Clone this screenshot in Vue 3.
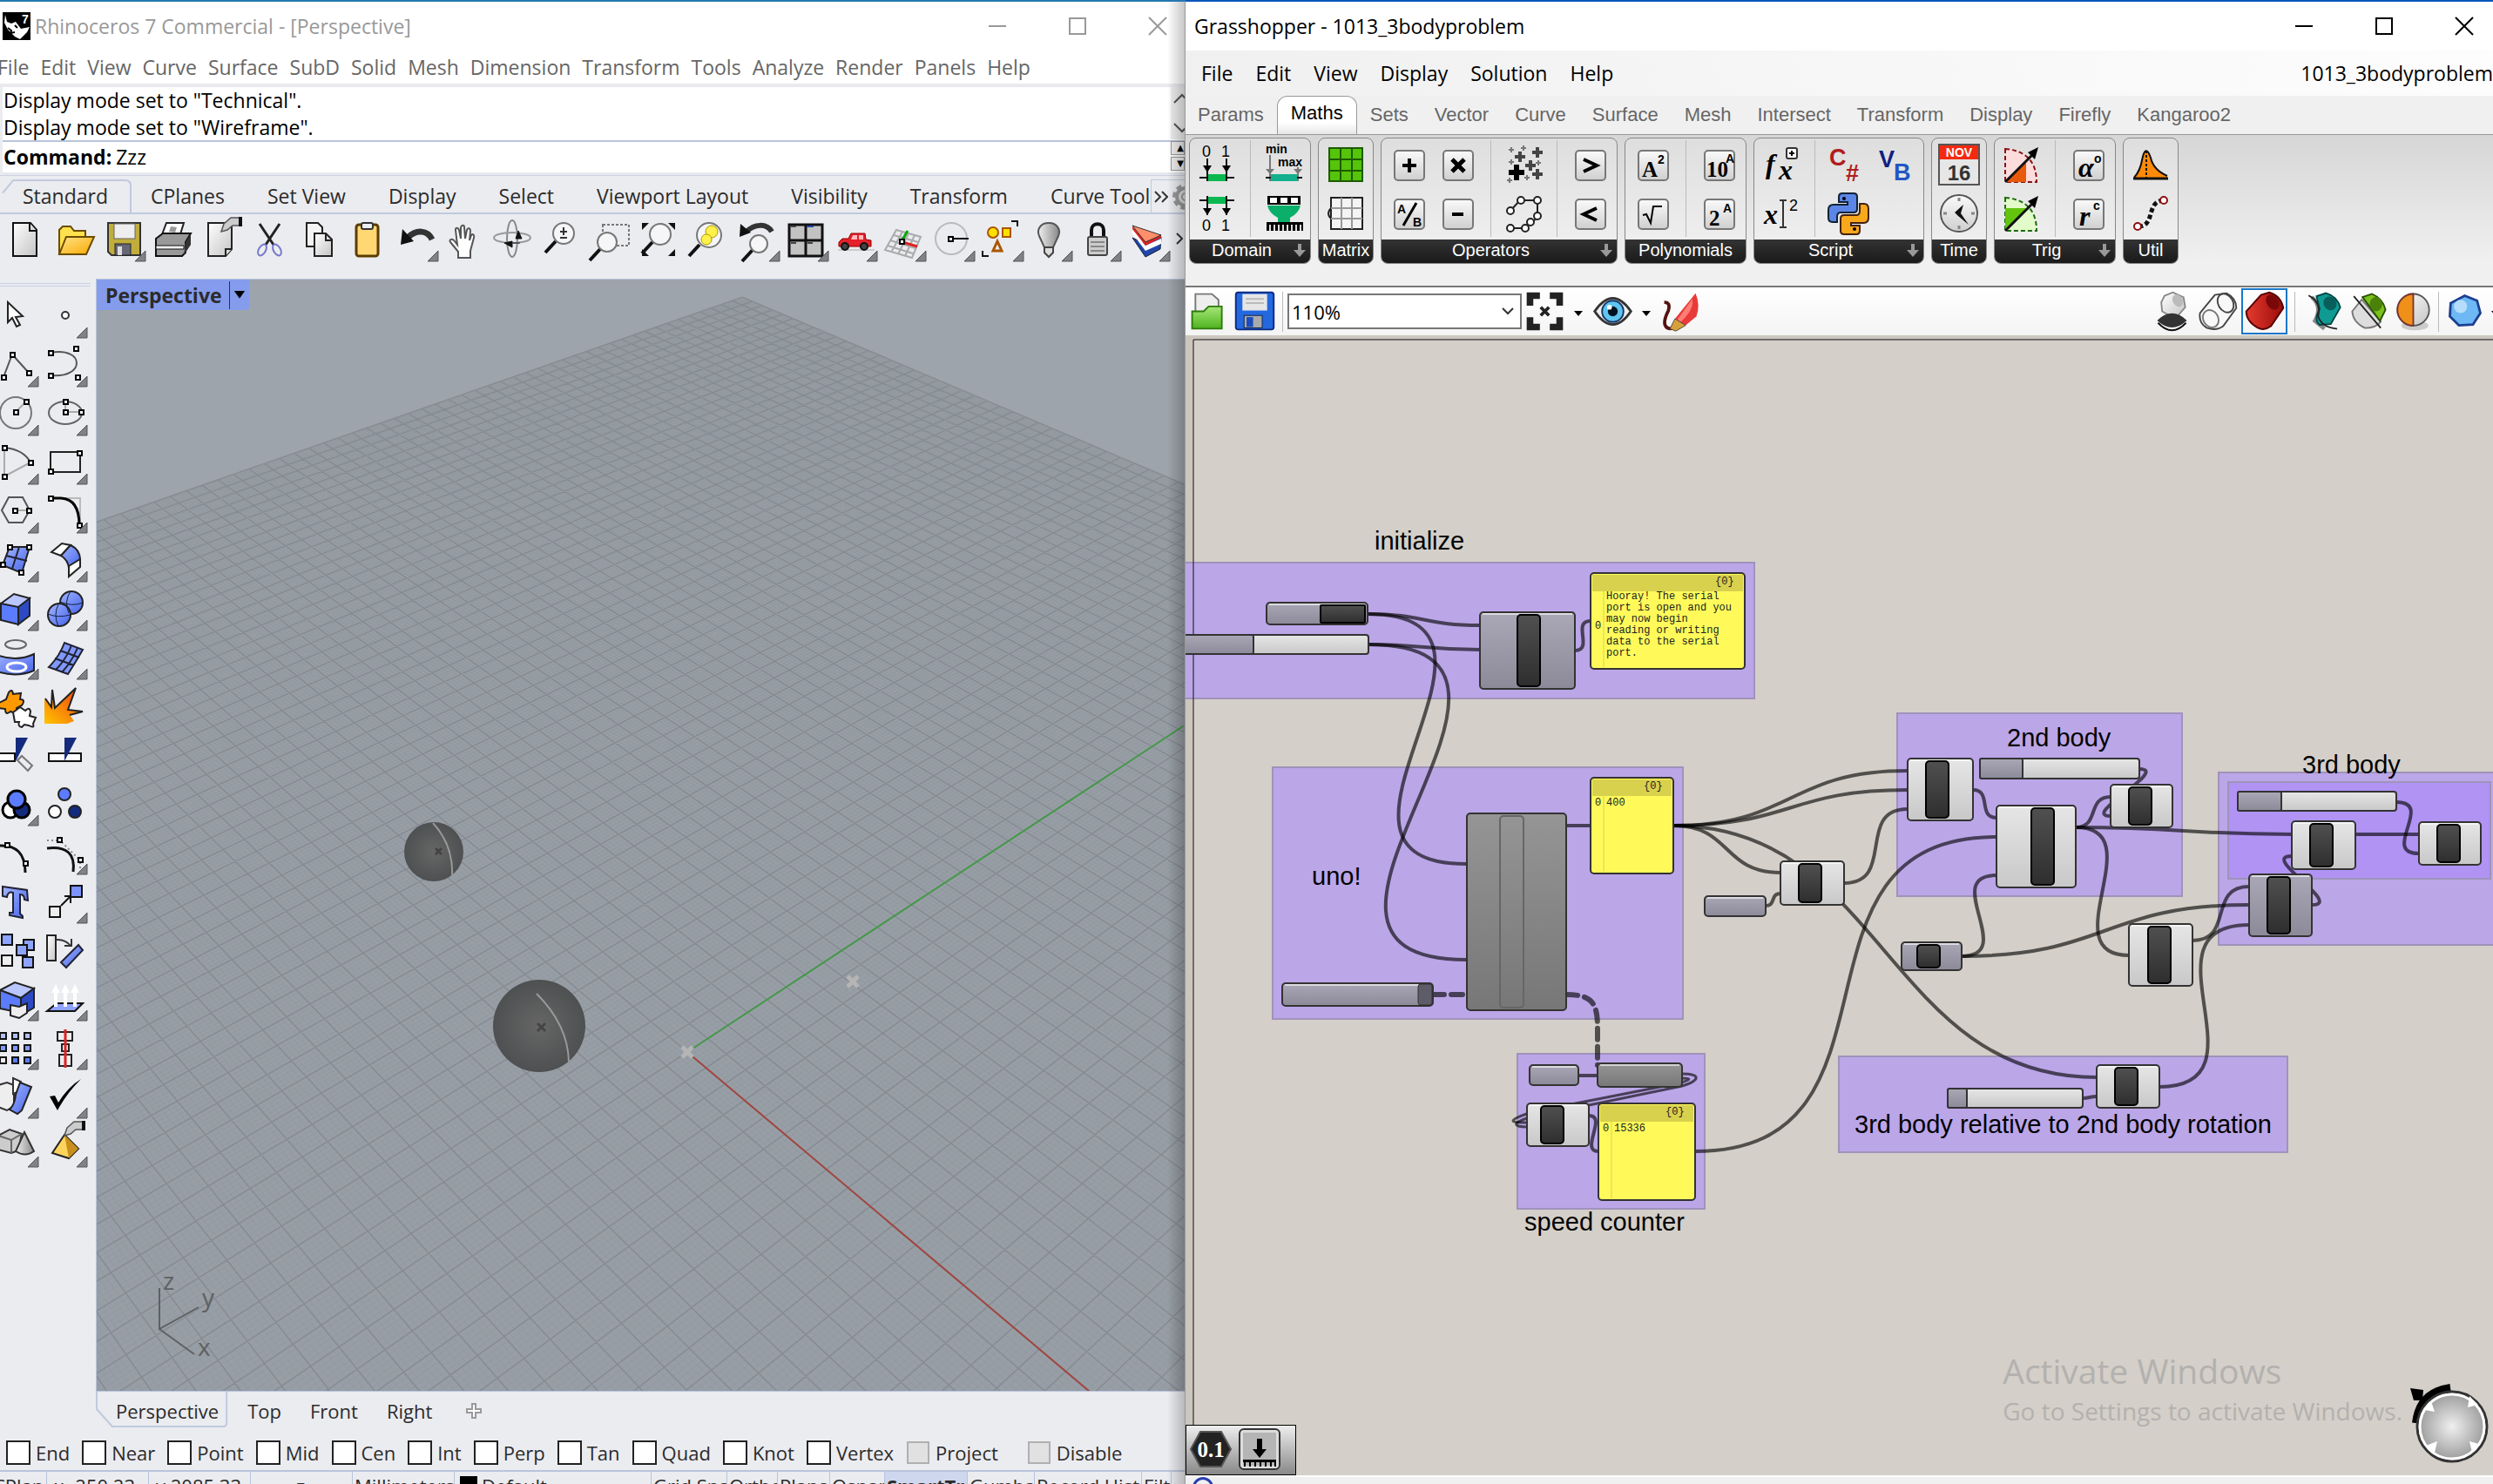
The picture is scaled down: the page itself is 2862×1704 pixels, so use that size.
<script setup>
import { ref } from 'vue'

const command = ref('Zzz')
const zoomLevel = ref('110%')

// small helpers for the icon strings
const sq = (x, y) => `<rect x="${x - 2}" y="${y - 2}" width="5" height="5" fill="#fff" stroke="#000" stroke-width="2"/>`
const box = (x, y, s, f) => `<rect x="${x}" y="${y}" width="${s}" height="${s}" fill="${f}" stroke="#111" stroke-width="2"/>`
const key = (inner) => `<rect x="12" y="12" width="34" height="34" rx="4" fill="url(#gKey)" stroke="#777" stroke-width="2"/>${inner}`
const lens = (x, y, r) => `<path d="M${x - r + 3} ${y + r - 3}L${x - r - 9} ${y + r + 10}" stroke="#111" stroke-width="4"/><circle cx="${x}" cy="${y}" r="${r}" fill="#f6f6f8" stroke="#777" stroke-width="2"/>`
const ln = (d, c = '#555', w = 2) => `<path d="${d}" fill="none" stroke="${c}" stroke-width="${w}"/>`
const hand = `<path d="M19 9l8-7h10v9h-8l-6 5-7 2z" fill="#ccc" stroke="#555" stroke-width="1.5"/><path d="M38 1v11" stroke="#111" stroke-width="4"/>`

const icons = {
  // standard toolbar
  newFile: `<path d="M15 10h20l7 8v30H15z" fill="url(#gPaper)" stroke="#111" stroke-width="2"/><path d="M34 10v9h8" fill="#ddd" stroke="#111" stroke-width="2"/>`,
  open: `<path d="M12 46V18l4-4h9l4 5h13v7" fill="#ffe04d" stroke="#6b4c00" stroke-width="2"/><path d="M12 46l8-20h32l-9 20z" fill="url(#gGold)" stroke="#6b4c00" stroke-width="2"/>`,
  save: `<path d="M12 10h37v37H16l-4-4z" fill="#c0ad3c" stroke="#333" stroke-width="2"/><rect x="19" y="11" width="24" height="17" fill="#eee" stroke="#666"/><rect x="20" y="34" width="18" height="13" fill="#667" stroke="#222"/><rect x="23" y="37" width="5" height="10" fill="#ddd"/>`,
  print: `<path d="M17 26l6-16h20l-5 16z" fill="#fff" stroke="#222" stroke-width="2"/><path d="M28 14l7 1-2 6-7-1z" fill="#999"/><path d="M11 28l8-6h32l-6 10v12l-4 4H11z" fill="#999" stroke="#111" stroke-width="2"/><path d="M45 32l6-9v12l-8 12z" fill="#333"/><path d="M11 36h32v4H11z" fill="#eee" stroke="#111"/>`,
  note: `<path d="M15 10h27v30l-7 8H15z" fill="url(#gPaper)" stroke="#222" stroke-width="2"/><path d="M35 48v-8h7" fill="#ddd" stroke="#222" stroke-width="2"/><g transform="translate(14 2)">${hand}</g>`,
  cut: `<path d="M18 11l16 24M41 11L25 35" stroke="#222" stroke-width="3"/><ellipse cx="21" cy="41" rx="4" ry="7" transform="rotate(30 21 41)" fill="none" stroke="#77c" stroke-width="2"/><ellipse cx="38" cy="41" rx="4" ry="7" transform="rotate(-30 38 41)" fill="none" stroke="#77c" stroke-width="2"/>`,
  copy: `<path d="M16 10h13l5 5v22H16z" fill="#f4f4f4" stroke="#222" stroke-width="2"/><path d="M25 22h13l7 7v19H25z" fill="url(#gPaper)" stroke="#222" stroke-width="2"/><path d="M38 22v8h7" fill="none" stroke="#222" stroke-width="2"/>`,
  paste: `<rect x="17" y="12" width="25" height="36" rx="3" fill="#ffd873" stroke="#5c3d00" stroke-width="3"/><rect x="23" y="10" width="13" height="7" rx="2" fill="#eee" stroke="#333" stroke-width="2"/>`,
  undo: `<path d="M48 29C43 18 30 17 20 27" fill="none" stroke="#333" stroke-width="7"/><path d="M12 35l2-18 13 14z" fill="#111"/>`,
  pan: `<path d="M22 43l-9-11c-2-4 3-4 5-1l3 4-2-17c0-3 3-3 4 0l2 10 0-13c1-3 4-3 4 0l1 13 2-10c1-3 4-2 4 1l-1 11 2-6c2-2 4 0 3 3l-4 15v8H22z" fill="#fff" stroke="#555" stroke-width="2"/>`,
  rotate: `<ellipse cx="28" cy="28" rx="6" ry="21" fill="none" stroke="#888" stroke-width="2"/><ellipse cx="28" cy="27" rx="21" ry="6" fill="none" stroke="#999" stroke-width="2"/><path d="M28 31l-9 2 9 5zM35 19l4 9h-7zM29 33h8" fill="#111" stroke="#111"/>`,
  zoomIn: `${lens(31, 22, 12)}<path d="M31 15v9M27 20h8M27 27h8" stroke="#333" stroke-width="2"/>`,
  zoomWin: `<rect x="20" y="12" width="30" height="24" fill="none" stroke="#777" stroke-width="2" stroke-dasharray="3 2"/>${lens(25, 32, 11)}`,
  zoomExt: `${lens(30, 23, 12)}<path d="M9 10h8l-8 8zM47 10h-8l8 8zM9 48h8l-8-8zM47 48h-8l8-8z" fill="#111"/>`,
  zoomSel: `${lens(30, 24, 14)}<circle cx="33" cy="20" r="7" fill="#fff04a" stroke="#a90"/><circle cx="27" cy="29" r="6" fill="#fff04a" stroke="#a90"/>`,
  zoomBack: `<path d="M46 20C40 10 26 11 17 20" fill="none" stroke="#333" stroke-width="6"/><path d="M9 26l1-15 12 10z" fill="#111"/>${lens(31, 34, 10)}`,
  views: `<rect x="10" y="12" width="38" height="36" fill="#c2c2c2" stroke="#111" stroke-width="3"/><path d="M29 12v36M10 30h38" stroke="#111" stroke-width="3"/><path d="M30 14h8" stroke="#24a" stroke-width="2"/><path d="M12 14h6M12 33h6M31 33h6" stroke="#444" stroke-width="2"/>`,
  car: `<path d="M10 41h42" stroke="#ccc" stroke-width="2"/><path d="M11 32l4-4h7l3-6h16l1 7 6 1v7H11z" fill="#e4202a" stroke="#900"/><path d="M27 24h5v5h-7zM34 24h5v5h-5z" fill="#fbb"/><circle cx="18" cy="37" r="4" fill="#444" stroke="#111" stroke-width="2"/><circle cx="40" cy="37" r="4" fill="#444" stroke="#111" stroke-width="2"/>`,
  cplane: `${ln('M21 18l28 8-10 24-31-9zM28 20l-12 22M35 22l-12 24M42 24L31 48M18 24l28 8M14 30l29 9M11 36l29 9', '#aaa')}<path d="M27 31l7-12" stroke="#0a0" stroke-width="3"/><path d="M28 32l17 5" stroke="#d22" stroke-width="3"/>${sq(27, 31)}`,
  setview: `<circle cx="28" cy="28" r="18" fill="none" stroke="#bbb" stroke-width="2"/><path d="M28 28h20" stroke="#111" stroke-width="2"/>${sq(27, 28)}`,
  select: `<circle cx="20" cy="21" r="6" fill="#ffe000" stroke="#a50" stroke-width="2"/><rect x="31" y="16" width="9" height="10" fill="#ffe000" stroke="#a50" stroke-width="2"/><path d="M25 31l5 11H20z" fill="none" stroke="#a50" stroke-width="3"/>${ln('M41 8h7v6M15 48H8v-6', '#111')}`,
  bulb: `<path d="M28 10c-10 0-14 8-11 15l6 13h10l6-13c3-7-1-15-11-15z" fill="url(#gGrey)" stroke="#555" stroke-width="2"/><path d="M23 38h10v6l-5 5-5-5z" fill="#ddd" stroke="#444" stroke-width="2"/>`,
  lock: `<path d="M21 27v-9c0-9 14-9 14 0v9" fill="none" stroke="#111" stroke-width="4"/><rect x="17" y="26" width="22" height="21" rx="2" fill="#ccc" stroke="#444" stroke-width="2"/><path d="M20 32h16M20 37h16M20 42h16" stroke="#888" stroke-width="2"/>`,
  layers: `<path d="M12 27l15 22 17-9 1-14-18 8z" fill="#2145a8" stroke="#123"/><path d="M12 22l15 20 18-8v-6L27 36 12 18z" fill="#fff"/><path d="M12 17l15 19 18-9v-4L27 31 12 14z" fill="#d22"/><path d="M12 13l33 11-18 8z" fill="#ff8f6b" stroke="#333"/>`,
  // side tools
  arrow: `<path d="M19 13v23l5-5 5 10 4-2-5-9 8-1z" fill="#fff" stroke="#222" stroke-width="2"/>`,
  point: `<circle cx="29" cy="28" r="4" fill="#fff" stroke="#333" stroke-width="2"/>`,
  polyline: ln('M14 43L24 17 43 38') + sq(14, 43) + sq(24, 17) + sq(43, 38),
  curve: ln('M12 15C52 8 52 45 12 41') + sq(12, 15) + sq(41, 10) + sq(12, 41) + sq(43, 43),
  circle: `<circle cx="28" cy="28" r="18" fill="none" stroke="#777" stroke-width="2"/>${ln('M28 27l12-12', '#aaa')}${sq(28, 27)}${sq(40, 15)}`,
  ellipse: `<ellipse cx="29" cy="28" rx="19" ry="13" fill="none" stroke="#666" stroke-width="2"/>${ln('M29 15v12h18', '#aaa')}${sq(29, 15)}${sq(29, 27)}${sq(47, 27)}`,
  arc: ln('M15 12v33l30-16', '#aaa') + ln('M15 12q22 2 30 17') + sq(15, 12) + sq(45, 29) + sq(15, 45),
  rect: `<rect x="12" y="17" width="34" height="23" fill="none" stroke="#222" stroke-width="2"/>${sq(45, 18)}${sq(12, 39)}`,
  polygon: ln('M12 28l8-15h16l8 15-8 14H20z') + ln('M27 28h16', '#aaa') + sq(27, 28) + sq(43, 28),
  fillet: ln('M12 14h34v31', '#bbb') + ln('M12 14h12q21 1 21 31', '#000', 3) + sq(12, 14) + sq(45, 45),
  surface: `<path d="M21 14h23l-9 30-22-9z" fill="url(#gBlue)" stroke="#222" stroke-width="2"/>${ln('M32 14l-8 25M17 24l24 6', '#223')}${sq(21, 14)}${sq(43, 14)}${sq(34, 43)}${sq(13, 34)}`,
  filletSrf: `<path d="M13 20l12-10 10 2-11 12z" fill="#fff" stroke="#222" stroke-width="2"/><path d="M24 24l11-12q11 5 11 17l-13 9q-1-9-9-14z" fill="url(#gBlue)" stroke="#222" stroke-width="2"/><path d="M33 36l13-8v9L33 48z" fill="#fff" stroke="#222" stroke-width="2"/>`,
  cube: `<path d="M11 23l15-11 18 5-13 12z" fill="#b9c6ff" stroke="#222" stroke-width="2"/><path d="M11 23l20 4v20l-20-5z" fill="#5c7cff" stroke="#222" stroke-width="2"/><path d="M31 27l13-10v20L31 47z" fill="#2d4ac4" stroke="#222" stroke-width="2"/>`,
  spheres: `<circle cx="36" cy="22" r="13" fill="url(#gBlue)" stroke="#222" stroke-width="2"/><circle cx="22" cy="36" r="13" fill="url(#gBlue)" stroke="#222" stroke-width="2"/>${ln('M23 21q14 6 26 1M35 9q-8 12-2 25M9 35q12 5 25 1M21 24q-6 12 0 25', '#124', 1)}`,
  project: `<ellipse cx="28" cy="14" rx="12" ry="5" fill="none" stroke="#666" stroke-width="2"/><path d="M4 25q24 10 45 0v19q-22 9-45 0z" fill="url(#gBlue)" stroke="#222" stroke-width="2"/><ellipse cx="29" cy="40" rx="11" ry="5" fill="none" stroke="#fff" stroke-width="3"/>`,
  mesh: `<path d="M10 40q12-12 18-28l21 8q-8 14-17 28z" fill="#7f98fb" stroke="#223" stroke-width="2"/>${ln('M17 30l22 8M23 21l22 8M36 15q-6 16-18 28M43 18q-6 15-18 28', '#223')}`,
  puzzle: `<path d="M9 25l8-4 3-8q4-5 5 2l9-1-1 7q7 0 2 7l-6 3 1 7-8-3q-6 5-6-3l-7-1z" fill="#f90" stroke="#222" stroke-width="2"/><path d="M25 36l8-6 6 4q5-5 6 1l-1 5 7 2-3 7q2 6-5 2l-5-1-3 3q-5-1-3-6l-5 0z" fill="#fff" stroke="#222" stroke-width="2"/>`,
  explode: `<path d="M5 49V20l8 10 1-20 3 21L41 8 32 33l17 2-15 4 5 7-8 3z" fill="url(#gFire)"/>${ln('M6 20l7 10 1-20 3 21L41 8 32 33l17 2-15 4', '#222')}`,
  trim: `<path d="M8 27h19v9H8z" fill="#fff" stroke="#111" stroke-width="2"/><path d="M28 9h14L28 36z" fill="#142a7c"/><path d="M30 35l5-5 12 11-5 6z" fill="none" stroke="#777" stroke-width="2"/>`,
  split: `<path d="M10 27h37v9H10z" fill="#fff" stroke="#111" stroke-width="2"/><path d="M28 9h14L28 36z" fill="#142a7c"/>`,
  join: `<circle cx="22" cy="36" r="9" fill="#fff" stroke="#000" stroke-width="3"/><circle cx="35" cy="36" r="9" fill="#142a7c" stroke="#000" stroke-width="3"/><circle cx="29" cy="24" r="10" fill="#5c7cff" stroke="#000" stroke-width="3"/>`,
  explodeGroup: `<circle cx="28" cy="18" r="7" fill="#5c7cff" stroke="#222" stroke-width="2"/><circle cx="17" cy="38" r="7" fill="#fff" stroke="#222" stroke-width="2"/><circle cx="40" cy="38" r="7" fill="#142a7c" stroke="#222" stroke-width="2"/>`,
  points: ln('M8 21q31-2 31 31', '#111', 3) + sq(18, 20) + sq(39, 41),
  curveEdit: ln('M8 24q34-4 30 27', '#111', 3) + `<path d="M8 15h14M25 17l20 20M46 40v12" stroke="#888" stroke-width="2" stroke-dasharray="2 3"/>` + sq(22, 14) + sq(46, 37),
  text: `<path d="M13 12l28 4 1 12-4-1q0-6-5-6v22l3 3v2l-15-3v-3h4V19q-6-2-7 5l-5-1z" fill="url(#gBlue)" stroke="#223" stroke-width="2"/>`,
  move: box(11, 35, 12, '#eee') + box(35, 11, 13, '#7b93fb') + ln('M24 34l11-11M28 23h7v8', '#111'),
  copyObj: box(12, 11, 12, '#8fa4ff') + box(37, 17, 12, '#8fa4ff') + box(29, 23, 12, '#8fa4ff') + box(12, 35, 12, '#eee') + box(36, 37, 12, '#8fa4ff'),
  rotateObj: `<rect x="8" y="12" width="10" height="29" fill="url(#gPaper)" stroke="#222" stroke-width="2"/>${ln('M18 17q11-1 17 7M28 24h8v-8', '#333')}<path d="M24 43l20-20 5 6-19 20z" fill="url(#gBlue)" stroke="#223" stroke-width="2"/>`,
  boolean: `<path d="M10 19l17-9 22 7-15 11z" fill="#b9c6ff" stroke="#222" stroke-width="2"/><path d="M10 19l24 9v17l-24-5z" fill="#5c7cff" stroke="#222" stroke-width="2"/><path d="M34 28l15-11v22l-15 9z" fill="#2d4ac4" stroke="#222" stroke-width="2"/><path d="M22 36l10 2 9-4v11l-9 6-10-3z" fill="#eee" stroke="#222" stroke-width="2"/>`,
  extrude: `<path d="M8 43l11-9h30L40 43z" fill="#8fa4ff" stroke="#111" stroke-width="2"/><path d="M18 38V22M29 38V22M40 38V22" stroke="#fff" stroke-width="4"/><path d="M13 22l5-10 5 10zM24 22l5-10 5 10zM35 22l5-10 5 10z" fill="#fff"/>`,
  array: [0, 1, 2].map(r => [0, 1, 2].map(c => box(10 + c * 14, 12 + r * 14, 7, r == 2 && c == 0 ? '#eee' : ['#b3c0ff', '#8299ff', '#5c7cff'][r])).join('')).join(''),
  align: `<rect x="20" y="11" width="17" height="10" fill="#eee" stroke="#222" stroke-width="2"/><rect x="25" y="25" width="8" height="8" fill="#eee" stroke="#222" stroke-width="2"/><rect x="22" y="37" width="14" height="13" fill="#eee" stroke="#222" stroke-width="2"/><path d="M29 8v44" stroke="#d22" stroke-width="3"/>`,
  bend: `<path d="M8 16l10-3 8 3v24l-8 5-10-4z" fill="#eee" stroke="#333" stroke-width="2"/><path d="M25 8l9 4-4 12-5 2z" fill="#fff" stroke="#333" stroke-width="2"/><path d="M33 13l13 5-11 27-5 4-9-5q6-6 7-17z" fill="url(#gBlue)" stroke="#222" stroke-width="2"/>`,
  check: `<path d="M11 29l6-1 4 8Q32 18 47 9 30 26 20 45z" fill="#000"/>`,
  solids: `<path d="M8 18l13-7 14 5-4 19-8 3-15-4z" fill="#ccc" stroke="#333" stroke-width="2"/><path d="M8 18l15 5 12-7M23 23v15" fill="none" stroke="#666" stroke-width="2"/><path d="M38 14l11 22q-10 7-21 0z" fill="url(#gGrey)" stroke="#333" stroke-width="2"/>`,
  pyramid: `<path d="M28 17l16 16-11 11-19-6z" fill="#ffd45c" stroke="#222" stroke-width="2"/><path d="M28 17l16 16-11 11z" fill="#c98f1c"/><g transform="translate(12 0)">${hand}</g>`,
  // ribbon
  dom1: `<text x="11" y="19" class="it">0</text><text x="33" y="19" class="it">1</text>${ln('M17 21v26M39 21v26', '#111')}<path d="M12 29h10l-5 8zM34 29h10l-5 8z"/><path d="M8 43h40" stroke="#111" stroke-width="2"/><path d="M18 39h20v8H18z" fill="#0bb84f"/>`,
  dom2: `<text x="8" y="15" class="is">min</text><text x="22" y="30" class="is">max</text>${ln('M13 17v30M45 31v16', '#777')}<path d="M8 33h10l-5 6zM40 33h10l-5 6z" fill="#777"/><path d="M8 43h42" stroke="#111" stroke-width="2"/><path d="M14 39h30v8H14z" fill="#12b08c"/>`,
  dom3: `<path d="M8 13h40" stroke="#111" stroke-width="2"/><path d="M18 9h20v8H18z" fill="#0bb84f"/>${ln('M17 8v22M39 8v22', '#111')}<path d="M12 22h10l-5 8zM34 22h10l-5 8z"/><text x="11" y="48" class="it">0</text><text x="33" y="48" class="it">1</text>`,
  dom4: `<path d="M10 8h38v10H10z"/><path d="M13 10h8v6h-8zM25 10h8v6h-8zM37 10h8v6h-8z" fill="#fff"/><path d="M10 19h38q-2 9-12 14v5H22v-5Q12 28 10 19z" fill="#0ab06a"/><path d="M9 38h42v10H9z"/><path d="M13 41v7M18 41v7M23 41v7M28 41v7M33 41v7M38 41v7M43 41v7M48 41v7" stroke="#ddd" stroke-width="2"/>`,
  mat1: `<rect x="9" y="9" width="38" height="38" fill="#55c40a" stroke="#1d5b00" stroke-width="2"/>${ln('M22 9v38M35 9v38M9 22h38M9 35h38', '#1d5b00')}`,
  mat2: `<path d="M11 22q-6 6 0 12" fill="none" stroke="#222" stroke-width="2"/><rect x="11" y="10" width="36" height="36" fill="#f4f4f4" stroke="#222" stroke-width="2"/>${ln('M23 10v36M35 10v36M11 22h36M11 34h36', '#999')}`,
  add: key(ln('M21 29h16M29 21v16', '#000', 4)),
  mul: key(ln('M22 22l14 14M36 22L22 36', '#000', 5)),
  div: key(`<text x="15" y="28" class="is">A</text><text x="33" y="43" class="is">B</text>${ln('M37 16L22 42', '#000', 3)}`),
  sub: key(ln('M22 29h13', '#000', 4)),
  massAdd: ln('M11 37h18M20 28v18', '#000', 6) + ln('M18 19h12M24 13v12M38 14h12M44 8v12M30 29h12M36 23v12M38 39h12M44 33v12', '#444', 4) + ln('M11 11h6M14 8v6M25 9h6M28 6v6M11 25h6M14 22v6M9 46h6M12 43v6M29 43h6M32 40v6M42 26h6M45 23v6', '#777', 2),
  relay: ln('M24 13h20v20L36 39 30 45H14M12 26l12-13', '#222') + [[25, 13], [44, 13], [13, 25], [44, 31], [36, 38], [30, 45], [13, 45]].map(p => `<circle cx="${p[0]}" cy="${p[1]}" r="4" fill="#fff" stroke="#222" stroke-width="2"/>`).join(''),
  gt: key(ln('M21 22l15 7-15 7', '#000', 4)),
  lt: key(ln('M36 22l-15 7 15 7', '#000', 4)),
  pow: key('<text x="16" y="42" class="ib">A</text><text x="34" y="27" class="is">2</text>'),
  sqrt: key(ln('M17 30l4-1 5 10 3-19h10', '#000', 2)),
  ten: key('<text x="14" y="42" class="ib">10</text><text x="36" y="26" class="is">A</text>'),
  two: key('<text x="17" y="42" class="ib">2</text><text x="33" y="27" class="is">A</text>'),
  fx: `<text x="10" y="38" class="ii">f</text><text x="25" y="45" class="ii">x</text><rect x="34" y="9" width="12" height="12" rx="2" fill="#fff" stroke="#333" stroke-width="2"/>${ln('M37 15h6M40 12v6', '#000')}`,
  x2: `<text x="8" y="40" class="ii">x</text>${ln('M26 13h8M30 13v30M26 44h8', '#333')}<text x="37" y="25" class="it">2</text>`,
  cs: '<text x="7" y="29" class="ic" fill="#b01d1d">C</text><text x="26" y="47" class="ic" fill="#b01d1d">#</text>',
  vb: '<text x="8" y="31" class="ic" fill="#102080">V</text><text x="25" y="46" class="ic" fill="#2257c4">B</text>',
  py: `<path d="M22 5h13q4 0 4 4v14q0 4-4 4H20q-4 0-4 5v6h-5q-5 0-5-5v-9q0-6 6-6h16v-3H18V9q0-4 4-4z" fill="#5b86e8" stroke="#123" stroke-width="2"/><path d="M38 52H24q-4 0-4-4V34q0-4 4-4h14q4 0 4-5v-8h5q5 0 5 6v10q0 6-6 6H32v3h10v6q0 4-4 4z" fill="#f7a81b" stroke="#421" stroke-width="2"/><circle cx="24" cy="11" r="2"/><circle cx="36" cy="46" r="2"/>`,
  cal: `<rect x="5" y="5" width="46" height="46" fill="#e6e6e6" stroke="#555" stroke-width="2"/><path d="M6 6h44v16H6z" fill="#f32a10"/><text x="28" y="19" class="im" fill="#fff">NOV</text><text x="28" y="46" class="id" fill="#333">16</text>`,
  clock: `<circle cx="28" cy="28" r="21" fill="url(#gKey)" stroke="#555" stroke-width="2"/>${ln('M28 10v4M28 42v4M10 28h4M42 28h4', '#888', 3)}<path d="M23 27l10-9-3 10 9 13-12-10z" fill="#111"/>`,
  trigR: `<path d="M9 10q36 3 36 38H9z" fill="#ffdcdc" stroke="#8b1111" stroke-width="2" stroke-dasharray="5 3"/><path d="M9 48L33 24v24z" fill="#e85a0a"/><path d="M9 48L43 14" stroke="#111" stroke-width="3"/><path d="M47 8l-4 14-8-8z"/>`,
  trigG: `<path d="M9 10q36 3 36 38H9z" fill="#e2fbc8" stroke="#1c6b11" stroke-width="2" stroke-dasharray="5 3"/><path d="M9 48V22h26z" fill="#63c40e"/><path d="M9 48L43 14" stroke="#111" stroke-width="3"/><path d="M47 8l-4 14-8-8z"/>`,
  alpha: key('<text x="17" y="42" class="ii">α</text><text x="35" y="26" class="is">o</text>'),
  rad: key('<text x="18" y="42" class="ii">r</text><text x="34" y="24" class="is">c</text>'),
  bell: `<path d="M9 43q8-8 9-22 4-16 10-2 3 14 19 22v2z" fill="#ff8a0a"/>${ln('M9 43q7-8 9-20 4-20 10-3 3 14 19 21', '#111')}<path d="M8 44h40" stroke="#111" stroke-width="3"/><path d="M23 12v32" stroke="#111" stroke-width="2" stroke-dasharray="3 2"/>`,
  interp: `<path d="M14 43c20 0 8-29 29-30" fill="none" stroke="#111" stroke-width="5" stroke-dasharray="5 3"/><circle cx="13" cy="43" r="4" fill="#fff" stroke="#8b1111" stroke-width="2"/><circle cx="43" cy="13" r="4" fill="#fff" stroke="#8b1111" stroke-width="2"/>`,
  // canvas toolbar
  ghOpen: `<path d="M12 7h20l8 7v20H12z" fill="#eee" stroke="#777" stroke-width="2"/><path d="M8 49V28h14l6-6h16v27z" fill="url(#gGreen)" stroke="#2d7a0a" stroke-width="2"/>`,
  ghSave: `<rect x="5" y="5" width="46" height="45" rx="3" fill="#2468e0" stroke="#0c2a80" stroke-width="2"/><rect x="13" y="7" width="30" height="20" fill="#e6e6e6"/><path d="M17 13h22M17 18h22" stroke="#bbb" stroke-width="2"/><rect x="15" y="33" width="22" height="15" fill="#aaa" stroke="#124"/><rect x="18" y="35" width="8" height="12" fill="#1a4cc0"/>`,
  focus: `${ln('M22 9H10v12M34 9h12v12M22 47H10V35M34 47h12V35', '#222', 8)}${ln('M23 23l10 10M33 23L23 33', '#222', 4)}`,
  eye: `<path d="M6 28q22-32 44 0-22 32-44 0z" fill="#eee" stroke="#333" stroke-width="3"/><circle cx="28" cy="28" r="13" fill="#5fc4f0" stroke="#136" stroke-width="2"/><circle cx="28" cy="28" r="6" fill="#012"/><circle cx="24" cy="23" r="3" fill="#fff"/>`,
  pencil: `<path d="M8 17q8 0 5 10-10 20 2 22 8 0 14-8" fill="none" stroke="#511" stroke-width="4"/><path d="M46 6q6 14 1 28L34 45 21 37z" fill="#e83a3a"/><path d="M42 13q3 12-14 28l-4-3z" fill="#ff7d72"/><path d="M21 37l13 8-12 7-7-3z" fill="#d8a03a" stroke="#543"/>`,
  prev1: `<path d="M19 9l10-4 13 6 2 12-12 14-16-9-1-11z" fill="url(#gPaper)" stroke="#888" stroke-width="2"/><ellipse cx="35" cy="15" rx="6" ry="8" transform="rotate(-30 35 15)" fill="#bbb"/><path d="M10 39q18-17 36 0-18 17-36 0z" fill="#333"/><path d="M11 42q17 18 34 0" fill="none" stroke="#111" stroke-width="2"/>`,
  prev2: `<path d="M24 8l14-2q12 6 12 18L34 46q-8 6-20 2Q4 42 6 30z" fill="#f8f8f8" stroke="#444" stroke-width="2"/><ellipse cx="37" cy="18" rx="9" ry="12" transform="rotate(-30 37 18)" fill="none" stroke="#444" stroke-width="2"/><ellipse cx="19" cy="37" rx="9" ry="11" transform="rotate(-30 19 37)" fill="none" stroke="#777" stroke-width="2"/>`,
  prev3: `<path d="M24 8l10-3q14 4 17 19L36 46q-8 6-16 2Q6 40 6 28z" fill="url(#gRed)" stroke="#500" stroke-width="2"/><ellipse cx="38" cy="17" rx="7" ry="10" transform="rotate(-35 38 17)" fill="#7a0808"/>`,
  prev4: `<path d="M12 10q14 12 4 30l12 10" fill="none" stroke="#888" stroke-width="5"/><path d="M18 9l12-4q14 4 18 18L36 44l-14 1q-8-5 0-20z" fill="#0f9a92" stroke="#044" stroke-width="2"/><ellipse cx="35" cy="18" rx="8" ry="9" transform="rotate(-35 35 18)" fill="#075e5a"/><path d="M8 8q16 8 12 26 4 14 24 16" fill="none" stroke="#222" stroke-width="2"/>`,
  prev5: `<path d="M7 28l12-15 24 28q-6 8-20 8Q8 42 7 28z" fill="#ddd" stroke="#777" stroke-width="2"/><path d="M20 10l12-4q14 6 17 20l-7 14z" fill="#7bc11c" stroke="#264d00" stroke-width="2"/><ellipse cx="37" cy="19" rx="8" ry="9" fill="#4a8209"/><path d="M9 9l34 40" stroke="#222" stroke-width="2"/>`,
  prev6: `<ellipse cx="30" cy="46" rx="17" ry="6" fill="#ccc"/><circle cx="28" cy="26" r="20" fill="url(#gPaper)" stroke="#555" stroke-width="2"/><path d="M28 6a20 20 0 000 40z" fill="#ef9018" stroke="#733" stroke-width="2"/>`,
  prev7: `<path d="M28 9l15 6 4 15-9 14-17 1-11-11 1-16z" fill="#6db8f5" stroke="#1c3f90" stroke-width="3"/><circle cx="23" cy="22" r="8" fill="#b5dcfb"/>`,
}

const rhinoMenu = ['File', 'Edit', 'View', 'Curve', 'Surface', 'SubD', 'Solid', 'Mesh', 'Dimension', 'Transform', 'Tools', 'Analyze', 'Render', 'Panels', 'Help']
const rhinoTabs = ['Standard', 'CPlanes', 'Set View', 'Display', 'Select', 'Viewport Layout', 'Visibility', 'Transform', 'Curve Tool']
const t = (s, fly) => ({ icon: s, fly })
const toolbar = [
  t('newFile'), t('open'), t('save', 1), t('print'), t('note'), t('cut'), t('copy'), t('paste'), t('undo', 1), t('pan'), t('rotate'), t('zoomIn'),
  t('zoomWin'), t('zoomExt'), t('zoomSel'), t('zoomBack', 1), t('views', 1), t('car', 1), t('cplane', 1), t('setview', 1), t('select', 1), t('bulb', 1), t('lock', 1), t('layers', 1),
]
const sideTools = [
  t('arrow'), t('point', 1), t('polyline', 1), t('curve', 1), t('circle', 1), t('ellipse', 1), t('arc', 1), t('rect', 1), t('polygon', 1), t('fillet', 1),
  t('surface', 1), t('filletSrf', 1), t('cube', 1), t('spheres', 1), t('project', 1), t('mesh', 1), t('puzzle'), t('explode'), t('trim'), t('split'),
  t('join', 1), t('explodeGroup'), t('points'), t('curveEdit', 1), t('text'), t('move', 1), t('copyObj'), t('rotateObj'), t('boolean', 1), t('extrude', 1),
  t('array', 1), t('align', 1), t('bend', 1), t('check', 1), t('solids', 1), t('pyramid', 1),
]
const viewTabs = ['Perspective', 'Top', 'Front', 'Right']
const osnaps = ['End', 'Near', 'Point', 'Mid', 'Cen', 'Int', 'Perp', 'Tan', 'Quad', 'Knot', 'Vertex']
const statusToggles = ['Grid Snap', 'Ortho', 'Planar', 'Osnap', 'SmartTrack', 'Gumball', 'Record History', 'Filter']

// ground grid, projected through the two vanishing points
const project = (u, v) => {
  const w = 1 + u + v
  return [(789 - 1344 * u + 3524 * v) / w, (1208 - 590 * u - 590 * v) / w].map(n => n.toFixed(1)).join(' ')
}
const U = 0.498, V = 0.433
function gridPath(step, skip) {
  let d = ''
  for (let i = -120; i <= 250; i += step) {
    if (skip && i % 5 === 0) continue
    const k = i / 250
    d += `M${project(k * U, -0.26)}L${project(k * U, V)}M${project(-0.24, k * V)}L${project(U, k * V)}`
  }
  return d
}
const majorGrid = gridPath(5)
const minorGrid = gridPath(1, true)
const floor = `M${project(U, V)}L${project(-0.24, V)}L${project(-0.24, -0.26)}L${project(U, -0.26)}z`

// grasshopper
const ghMenu = ['File', 'Edit', 'View', 'Display', 'Solution', 'Help']
const ghTabs = ['Params', 'Maths', 'Sets', 'Vector', 'Curve', 'Surface', 'Mesh', 'Intersect', 'Transform', 'Display', 'Firefly', 'Kangaroo2']
const panels = [
  { name: 'Domain', more: true, cols: [[['dom1', 'dom3']], [['dom2', 'dom4']]] },
  { name: 'Matrix', cols: [[['mat1', 'mat2']]] },
  { name: 'Operators', more: true, cols: [[['add', 'div'], ['mul', 'sub']], [['massAdd', 'relay']], [['gt', 'lt']]] },
  { name: 'Polynomials', cols: [[['pow', 'sqrt']], [['ten', 'two']]] },
  { name: 'Script', more: true, cols: [[['fx', 'x2']], [['cs', 'py'], ['vb']]] },
  { name: 'Time', cols: [[['cal', 'clock']]] },
  { name: 'Trig', more: true, cols: [[['trigR', 'trigG']], [['alpha', 'rad']]] },
  { name: 'Util', cols: [[['bell', 'interp']]] },
]

const groups = [
  [1350, 646, 664, 156], [1461, 881, 471, 289], [2178, 819, 327, 210], [2547, 887, 330, 198],
  [1742, 1210, 215, 178], [2111, 1213, 515, 110],
]
const labels = [
  ['initialize', 1578, 631], ['uno!', 1506, 1016], ['2nd body', 2304, 857], ['3rd body', 2643, 888],
  ['speed counter', 1750, 1413], ['3rd body relative to 2nd body rotation', 2129, 1301],
]
const nodes = [
  { x: 1699, y: 703, w: 109, h: 88, c: 'grey', bar: 43 },
  { x: 1454, y: 692, w: 116, h: 25, c: 'grey' },
  { x: 1957, y: 1029, w: 70, h: 23, c: 'grey' },
  { x: 1472, y: 1129, w: 173, h: 26, c: 'grey' },
  { x: 2190, y: 871, w: 75, h: 71, c: 'light', bar: 21 },
  { x: 2423, y: 901, w: 71, h: 49, c: 'light', bar: 21 },
  { x: 2292, y: 925, w: 91, h: 94, c: 'light', bar: 40 },
  { x: 2044, y: 989, w: 73, h: 50, c: 'light', bar: 21 },
  { x: 2183, y: 1082, w: 69, h: 32, c: 'grey', bar: 18 },
  { x: 2444, y: 1061, w: 73, h: 71, c: 'light', bar: 22 },
  { x: 2631, y: 943, w: 73, h: 55, c: 'light', bar: 21 },
  { x: 2777, y: 944, w: 71, h: 49, c: 'light', bar: 21 },
  { x: 2582, y: 1004, w: 72, h: 71, c: 'grey', bar: 21 },
  { x: 1756, y: 1223, w: 56, h: 23, c: 'grey' },
  { x: 1834, y: 1221, w: 97, h: 27, c: 'dark' },
  { x: 1753, y: 1267, w: 71, h: 49, c: 'light', bar: 16 },
  { x: 2407, y: 1223, w: 72, h: 49, c: 'light', bar: 21 },
]
// x, y, width, height, width of the name part
const sliders = [
  [1340, 729, 231, 22, 99], [2273, 871, 183, 23, 49], [2569, 909, 182, 22, 50], [2236, 1250, 155, 22, 22],
]
const notes = [
  { x: 1826, y: 658, w: 177, h: 110, idx: 722, top: 688, lines: ['Hooray! The serial', 'port is open and you', 'may now begin', 'reading or writing', 'data to the serial', 'port.'] },
  { x: 1826, y: 893, w: 95, h: 110, idx: 925, top: 925, lines: ['400'] },
  { x: 1835, y: 1267, w: 111, h: 111, idx: 1299, top: 1299, lines: ['15336'] },
]
const wire = (x1, y1, x2, y2, d) => {
  const dx = x2 - x1
  const k = d ?? (dx > Math.abs(y2 - y1) ? 0.5 : 0.65) * Math.hypot(dx, y2 - y1)
  return `M${x1} ${y1}C${x1 + k} ${y1} ${x2 - k} ${y2} ${x2} ${y2}`
}
const wires = [
  wire(1570, 705, 1699, 718), wire(1571, 740, 1699, 746), wire(1570, 705, 1683, 992, 210), wire(1571, 740, 1683, 1102, 265),
  wire(1808, 747, 1826, 713, 22), wire(1798, 948, 1826, 948), wire(1921, 948, 2190, 885), wire(1921, 948, 2190, 907),
  wire(1921, 948, 2044, 1002), wire(1921, 948, 2407, 1237, 240), wire(2117, 1014, 2190, 929, 60), wire(2027, 1040, 2044, 1026, 12),
  wire(2265, 907, 2292, 939, 22), wire(1946, 1322, 2292, 961, 260), wire(2252, 1098, 2292, 1005, 65), wire(2252, 1098, 2582, 1039),
  wire(2383, 950, 2423, 915, 28), wire(2383, 950, 2631, 958), wire(2383, 950, 2444, 1097, 90), wire(2456, 883, 2423, 937, 36),
  wire(2517, 1080, 2582, 1018, 48), wire(2479, 1248, 2582, 1062, 130), wire(2654, 1039, 2631, 983, 38), wire(2751, 921, 2777, 980, 45),
  wire(2704, 958, 2777, 958), wire(1812, 1235, 1834, 1235), wire(1824, 1281, 1835, 1322, 22), wire(2391, 1261, 2407, 1259, 8),
]
// list wires are drawn as two parallel strands
const doubleWires = [
  'M1931 1233C1954 1233 1951 1241 1931 1247L1756 1283C1734 1290 1738 1294 1753 1294',
  'M1931 1238C1942 1238 1942 1240 1926 1244L1758 1277C1726 1288 1736 1289 1753 1289',
]
</script>

<template>
  <div class="desktop">
    <svg class="defs" aria-hidden="true">
      <defs>
        <linearGradient id="gPaper" x2="1" y2="1"><stop stop-color="#fff" /><stop offset="1" stop-color="#c4c4c4" /></linearGradient>
        <linearGradient id="gKey" x2="0" y2="1"><stop stop-color="#fafafa" /><stop offset="1" stop-color="#cfcfcf" /></linearGradient>
        <linearGradient id="gGold" x2="1" y2="1"><stop stop-color="#ffe58a" /><stop offset="1" stop-color="#f9a800" /></linearGradient>
        <linearGradient id="gGrey" x2="1" y2="0"><stop stop-color="#eee" /><stop offset="1" stop-color="#888" /></linearGradient>
        <linearGradient id="gBlue" x2="1" y2="1"><stop stop-color="#a3b5ff" /><stop offset="1" stop-color="#4463ea" /></linearGradient>
        <linearGradient id="gFire" x2="1" y1="1" y2="0"><stop stop-color="#ffc400" /><stop offset="1" stop-color="#f03a10" /></linearGradient>
        <linearGradient id="gGreen" x2="0" y2="1"><stop stop-color="#a6e67a" /><stop offset="1" stop-color="#4fb31e" /></linearGradient>
        <linearGradient id="gRed" x2="1" y2="0"><stop stop-color="#e53a2e" /><stop offset="1" stop-color="#9a0c0c" /></linearGradient>
        <linearGradient id="nLight" x2="0" y2="1"><stop stop-color="#e6e6e6" /><stop offset="1" stop-color="#c8c8c8" /></linearGradient>
        <linearGradient id="nGrey" x2="0" y2="1"><stop stop-color="#aaa8b6" /><stop offset="1" stop-color="#8c8a98" /></linearGradient>
        <linearGradient id="nDark" x2="0" y2="1"><stop stop-color="#959595" /><stop offset="1" stop-color="#777" /></linearGradient>
        <linearGradient id="nBar" x2="0" y2="1"><stop stop-color="#505050" /><stop offset="1" stop-color="#2e2e2e" /></linearGradient>
        <radialGradient id="gBall"><stop stop-color="#666" /><stop offset="1" stop-color="#4e5051" /></radialGradient>
        <radialGradient id="gCompass"><stop stop-color="#f0f0f0" /><stop offset="1" stop-color="#999" /></radialGradient>
      </defs>
    </svg>

    <main class="rhino">
      <header class="title">
        <svg class="logo" viewBox="0 0 32 32"><path d="M0 0h32v32H0z" /><path d="M3 3l2 8 5 2 5-2 6 8 10-2-3 6-8 8-6-3-8-8-4-8z" fill="#fff" /><path d="M6 18l4 3-1 3 5-1M14 15l3 3" stroke="#000" stroke-width="2" fill="none" /><text x="22" y="13" fill="#fff" class="seven">7</text></svg>
        <h1>Rhinoceros 7 Commercial - [Perspective]</h1>
        <div class="win-buttons">
          <button aria-label="Minimize"><svg viewBox="0 0 20 20"><path d="M0 10h20" /></svg></button>
          <button aria-label="Maximize"><svg viewBox="0 0 20 20"><path d="M1 1h18v18H1z" /></svg></button>
          <button aria-label="Close"><svg viewBox="0 0 20 20"><path d="M0 0l20 20M20 0L0 20" /></svg></button>
        </div>
      </header>
      <nav class="menu">
        <button v-for="m in rhinoMenu" :key="m">{{ m }}</button>
      </nav>
      <section class="command">
        <div class="history">
          <p>Display mode set to "Technical".</p>
          <p>Display mode set to "Wireframe".</p>
        </div>
        <div class="prompt">
          <label for="command">Command:</label>
          <input id="command" v-model="command" type="text" />
        </div>
        <svg class="chevrons" viewBox="0 0 16 60"><path d="M4 18l9-9 9 9M4 42l9 9 9-9" fill="none" stroke="#555" stroke-width="2" /></svg>
        <div class="spin"><i>▲</i><i>▼</i></div>
      </section>
      <nav class="tabs">
        <button v-for="(tab, i) in rhinoTabs" :key="tab" :class="{ on: i === 0 }">
          <svg v-if="i === 0" class="edge" viewBox="0 0 145 39" preserveAspectRatio="none"><path d="M0 16L12 1h126q6 0 6 6v32" /></svg>
          {{ tab }}
        </button>
        <span class="more">
          <svg viewBox="0 0 16 16"><path d="M1 2l6 6-6 6M9 2l6 6-6 6" fill="none" stroke="#333" stroke-width="2" /></svg>
          <svg viewBox="0 0 30 30"><circle cx="15" cy="15" r="10" fill="#ddd" stroke="#999" stroke-width="4" /><circle cx="15" cy="15" r="13" fill="none" stroke="#999" stroke-width="4" stroke-dasharray="6 4" /><circle cx="15" cy="15" r="4" fill="#eee" stroke="#999" stroke-width="2" /></svg>
        </span>
      </nav>
      <div class="toolbar">
        <button v-for="b in toolbar" :key="b.icon" :aria-label="b.icon">
          <svg viewBox="0 0 56 56" v-html="icons[b.icon] + (b.fly ? '<path d=\'M55 42v12H43z\' fill=\'#808287\' stroke=\'#555\'/>' : '')"></svg>
        </button>
        <svg class="next" viewBox="0 0 8 16"><path d="M1 2l6 6-6 6" fill="none" stroke="#333" stroke-width="2" /></svg>
      </div>
      <div class="work">
        <aside class="side">
          <div class="side-grid">
            <button v-for="b in sideTools" :key="b.icon" :aria-label="b.icon">
              <svg viewBox="0 0 56 56" v-html="icons[b.icon] + (b.fly ? '<path d=\'M54 42v12H42z\' fill=\'#808287\' stroke=\'#555\'/>' : '')"></svg>
            </button>
          </div>
        </aside>
        <section class="viewport">
          <svg class="scene" viewBox="111 321 1249 1277" preserveAspectRatio="xMinYMin slice">
            <path :d="floor" fill="#979ea5" />
            <path :d="minorGrid" fill="none" stroke="#868b93" stroke-opacity=".22" />
            <path :d="majorGrid" fill="none" stroke="#82868e" stroke-width="1.5" stroke-opacity=".75" />
            <path d="M789 1208L1358 834" stroke="#45994a" stroke-width="2" />
            <path d="M789 1208L1251 1598" stroke="#a14642" stroke-width="2" />
            <path d="M783 1202l12 12M795 1202l-12 12M973 1121l12 12M985 1121l-12 12" stroke="#b5b5b5" stroke-width="5" />
            <circle cx="498" cy="978" r="34" fill="url(#gBall)" />
            <circle cx="619" cy="1178" r="53" fill="url(#gBall)" />
            <path d="M497 945q24 26 22 62M616 1141q36 36 37 78" fill="none" stroke="#999" stroke-width="2" />
            <path d="M500 974l7 7M507 974l-7 7M617 1175l9 9M626 1175l-9 9" stroke="#444" stroke-width="3" />
            <path d="M183 1479v47l45-25M183 1526l40 29" fill="none" stroke="#5d6164" stroke-width="2" />
            <g class="axis"><text x="187" y="1481">z</text><text x="232" y="1500">y</text><text x="227" y="1557">x</text></g>
          </svg>
          <button class="view-name"><b>Perspective</b><svg viewBox="0 0 16 12"><path d="M1 1h14L8 11z" /></svg></button>
        </section>
      </div>
      <nav class="view-tabs">
        <button v-for="(v, i) in viewTabs" :key="v" :class="{ on: i === 0 }">
          <svg v-if="i === 0" class="edge" viewBox="0 0 152 41" preserveAspectRatio="none"><path d="M1 0v20l18 20h128q4 0 4-4V0" /></svg>
          {{ v }}
        </button>
        <button aria-label="Add viewport"><svg class="plus" viewBox="0 0 18 18"><path d="M7 1h4v6h6v4h-6v6H7v-6H1V7h6z" fill="#fff" stroke="#999" stroke-width="2" /></svg></button>
      </nav>
      <div class="osnap">
        <label v-for="o in osnaps" :key="o"><input type="checkbox" />{{ o }}</label>
        <label class="off"><input type="checkbox" disabled />Project</label>
        <label class="off last"><input type="checkbox" disabled />Disable</label>
      </div>
      <footer class="status">
        <span>CPlan</span><span>x -250.23</span><span>y 2085.33</span><span class="mid">z</span><span>Millimeters</span>
        <span class="layer"><i></i>Default</span>
        <button v-for="s in statusToggles" :key="s" :class="{ on: s === 'SmartTrack' }">{{ s }}</button>
      </footer>
    </main>

    <main class="gh">
      <header class="title">
        <h1>Grasshopper - 1013_3bodyproblem</h1>
        <div class="win-buttons">
          <button aria-label="Minimize"><svg viewBox="0 0 20 20"><path d="M0 10h20" /></svg></button>
          <button aria-label="Maximize"><svg viewBox="0 0 20 20"><path d="M1 1h18v18H1z" /></svg></button>
          <button aria-label="Close"><svg viewBox="0 0 20 20"><path d="M0 0l20 20M20 0L0 20" /></svg></button>
        </div>
      </header>
      <nav class="gh-menu">
        <button v-for="m in ghMenu" :key="m">{{ m }}</button>
        <span>1013_3bodyproblem</span>
      </nav>
      <nav class="gh-tabs">
        <button v-for="g in ghTabs" :key="g" :class="{ on: g === 'Maths' }">{{ g }}</button>
      </nav>
      <div class="ribbon">
        <section v-for="p in panels" :key="p.name" class="rpanel">
          <div class="rbody">
            <div v-for="(sec, i) in p.cols" :key="i" class="rsec">
              <div v-for="(col, j) in sec" :key="j" class="rcol">
                <button v-for="ic in col" :key="ic" :aria-label="ic"><svg viewBox="0 0 56 56" v-html="icons[ic]"></svg></button>
              </div>
            </div>
          </div>
          <h2><span>{{ p.name }}</span><svg v-if="p.more" viewBox="0 0 14 16"><path d="M5 1h4v7h5l-7 8-7-8h5z" fill="#999" /></svg></h2>
        </section>
      </div>
      <div class="gh-tools">
        <button v-for="b in ['ghOpen', 'ghSave']" :key="b" :aria-label="b"><svg viewBox="0 0 56 56" v-html="icons[b]"></svg></button>
        <hr />
        <div class="zoom">
          <select v-model="zoomLevel" aria-label="Zoom"><option>110%</option><option>100%</option></select>
          <svg viewBox="0 0 14 9"><path d="M1 1l6 6 6-6" fill="none" stroke="#333" stroke-width="2" /></svg>
        </div>
        <button aria-label="Zoom extents"><svg viewBox="0 0 56 56" v-html="icons.focus"></svg></button>
        <i class="drop"></i>
        <button aria-label="Named views"><svg viewBox="0 0 56 56" v-html="icons.eye"></svg></button>
        <i class="drop"></i>
        <button aria-label="Sketch"><svg viewBox="0 0 56 56" v-html="icons.pencil"></svg></button>
        <div class="preview">
          <button v-for="n in 3" :key="n" :class="{ on: n === 3 }" :aria-label="'Preview ' + n"><svg viewBox="0 0 56 56" v-html="icons['prev' + n]"></svg></button>
          <hr />
          <button v-for="n in [4, 5, 6]" :key="n" class="narrow" :aria-label="'Preview ' + n"><svg viewBox="0 0 56 56" v-html="icons['prev' + n]"></svg></button>
          <hr class="tight" />
          <button aria-label="Preview mesh"><svg viewBox="0 0 56 56" v-html="icons.prev7"></svg></button>
          <i class="drop"></i>
        </div>
      </div>
      <section class="canvas">
        <svg class="graph" viewBox="1361 385 1501 1310" preserveAspectRatio="xMinYMin slice">
          <path d="M1360 384h1800v6H1370v1400h-10z" fill="#cbc6be" />
          <g fill="#bba6e8" stroke="#9f93bb" stroke-width="2">
            <rect v-for="(g, i) in groups" :key="i" :x="g[0]" :y="g[1]" :width="g[2]" :height="g[3]" />
            <rect x="2558" y="898" width="301" height="111" fill="#b093f3" />
          </g>
          <path d="M3160 390H1370V1800" fill="none" stroke="#111" />
          <path v-for="(w, i) in wires" :key="'w' + i" :d="w" class="wire" />
          <path v-for="(w, i) in doubleWires" :key="'d' + i" :d="w" class="wire thin" />
          <path d="M1645 1142h38M1798 1142C1828 1142 1834 1152 1834 1180V1223" class="wire dash" />
          <g v-for="(s, i) in sliders" :key="'s' + i">
            <rect :x="s[0]" :y="s[1]" :width="s[2]" :height="s[3]" rx="3" fill="url(#nLight)" class="rim" />
            <rect :x="s[0]" :y="s[1]" :width="s[4]" :height="s[3]" rx="2" fill="url(#nGrey)" class="rim" />
          </g>
          <g v-for="(n, i) in nodes" :key="'n' + i">
            <rect :x="n.x" :y="n.y" :width="n.w" :height="n.h" rx="4" :fill="{ light: 'url(#nLight)', grey: 'url(#nGrey)', dark: 'url(#nDark)' }[n.c]" class="rim" />
            <path :d="`M${n.x + 3} ${n.y + 2}h${n.w - 6}`" stroke="#fff" stroke-opacity=".6" stroke-width="2" />
            <rect v-if="n.bar" :x="n.x + n.bar" :y="n.y + 3" width="26" :height="n.h - 6" rx="4" fill="url(#nBar)" stroke="#000" stroke-width="2" />
          </g>
          <rect x="1516" y="695" width="51" height="20" rx="1" fill="url(#nBar)" stroke="#000" stroke-width="2" />
          <rect x="1628" y="1130" width="16" height="24" rx="3" fill="#5e5c68" stroke="#333" />
          <rect x="1684" y="934" width="114" height="226" rx="4" fill="url(#nDark)" class="rim" />
          <rect x="1722" y="937" width="27" height="220" rx="4" fill="none" stroke="#666" stroke-width="2" />
          <g v-for="(n, i) in notes" :key="'p' + i" class="note">
            <rect :x="n.x" :y="n.y" :width="n.w" :height="n.h" rx="4" fill="#fffa5a" class="rim" />
            <path :d="`M${n.x + 2} ${n.y + 2}h${n.w - 4}v19h${4 - n.w}z`" fill="#d8d14d" />
            <path :d="`M${n.x + 15} ${n.y + 2}v${n.h - 4}`" stroke="#d9d24d" />
            <text :x="n.x + n.w - 34" :y="n.y + 13">{0}</text>
            <text :x="n.x + 5" :y="n.idx">0</text>
            <text v-for="(l, k) in n.lines" :key="l" :x="n.x + 18" :y="n.top + k * 13">{{ l }}</text>
          </g>
          <text v-for="l in labels" :key="l[0]" :x="l[1]" :y="l[2]" class="caption">{{ l[0] }}</text>
        </svg>
        <div class="watermark">
          <p class="big">Activate Windows</p>
          <p>Go to Settings to activate Windows.</p>
        </div>
        <svg class="compass" viewBox="0 0 92 92">
          <path d="M6 46Q10 10 46 5" fill="none" stroke="#000" stroke-width="8" /><path d="M0 6l15 2-1 12-10 0z" />
          <circle cx="48" cy="50" r="40" fill="url(#gCompass)" stroke="#333" stroke-width="3" />
          <circle cx="48" cy="50" r="37" fill="none" stroke="#fff" stroke-width="3" />
          <path d="M16 31l8-10 4 12zM66 28l2-13 10 10zM18 72l13-5-3 13zM68 67l11 3-8 10z" fill="#fff" />
        </svg>
        <div class="widgets">
          <button aria-label="Decimals"><svg viewBox="0 0 48 48"><path d="M12 4h24l11 20-11 20H12L1 24z" fill="#222" stroke="#555" stroke-width="2" /><text x="24" y="33" fill="#fff" class="hex">0.1</text></svg></button>
          <button aria-label="Panel"><svg viewBox="0 0 48 48"><rect x="1" y="1" width="46" height="46" rx="5" fill="#ddd" stroke="#333" stroke-width="2" /><rect x="5" y="5" width="38" height="38" fill="#b5b5b5" /><path d="M21 12h6v12h5l-8 10-8-10h5zM5 36h38v3H5z" /><path d="M7 39v5M13 39v5M19 39v5M25 39v5M31 39v5M37 39v5M42 39v5" stroke="#000" stroke-width="2" /></svg></button>
        </div>
      </section>
      <footer class="gh-status"><i></i></footer>
    </main>
  </div>
</template>

<style>
body { background: #ebecf0; overflow: hidden; }
.it { font: 18px "Liberation Sans", sans-serif; }
.is { font: bold 14px "Liberation Sans", sans-serif; }
.ib { font: bold 25px "Liberation Serif", serif; }
.ii { font: italic bold 32px "Liberation Serif", serif; }
.ic { font: bold 27px "Liberation Sans", sans-serif; }
.im { font: bold 14px "Liberation Sans", sans-serif; text-anchor: middle; }
.id { font: bold 24px "Liberation Sans", sans-serif; text-anchor: middle; }
</style>

<style scoped>
.desktop {
  display: grid;
  grid-template-columns: 1360fr 1502fr;
  height: 100vh;
  overflow: hidden;
  font-family: "Open Sans", "Noto Sans", sans-serif;
  font-size: 23px;
  color: #2b2b2b;
}
.defs { position: absolute; width: 0; height: 0; }
button { border: 0; background: none; padding: 0; margin: 0; font: inherit; color: inherit; white-space: nowrap; }
p, h1, h2 { margin: 0; font-size: inherit; font-weight: normal; }
svg { display: block; }
.rhino, .gh { display: flex; flex-direction: column; min-width: 0; min-height: 0; overflow: hidden; position: relative; }
.rhino { border-top: 2px solid #2378b0; background: #ebecf0; }
.rhino::after { content: ""; position: absolute; top: 0; right: 0; bottom: 0; width: 20px; background: linear-gradient(90deg, transparent, rgba(0, 0, 0, .22)); pointer-events: none; }

.title { display: flex; align-items: center; height: 56px; background: #fff; color: #999; flex: none; }
.title h1 { margin-left: 5px; }
.logo { width: 32px; height: 32px; margin-left: 3px; }
.seven { font: bold 14px "Liberation Sans", sans-serif; }
.win-buttons { display: flex; margin-left: auto; }
.win-buttons button { width: 92px; display: grid; place-items: center; }
.win-buttons svg { width: 20px; height: 20px; overflow: visible; fill: none; stroke: #999; stroke-width: 2; }
.rhino .win-buttons { margin-right: -15px; }

.menu { display: flex; gap: 13px; height: 38px; background: #fff; color: #666; flex: none; margin-left: -3px; align-items: center; border-bottom: 4px solid #e9eaee; }
.command { background: #fff; color: #000; height: 98px; margin-left: 3px; border-bottom: 3px solid #e6e8ee; position: relative; flex: none; }
.history { height: 61px; border-bottom: 2px solid #b9c4dc; padding-left: 1px; }
.history p { line-height: 31px; }
.prompt { display: flex; align-items: center; height: 33px; gap: 5px; padding-left: 1px; }
.prompt label { font-weight: bold; }
.prompt input { border: 0; outline: 0; padding: 0; font: inherit; flex: 1; background: none; }
.chevrons { position: absolute; right: 0; top: 0; width: 16px; height: 60px; background: #eee; }
.spin { position: absolute; right: 0; bottom: 2px; width: 16px; display: grid; gap: 2px; }
.spin i { font: normal 10px/14px "DejaVu Sans", sans-serif; border: 1px solid #999; background: #eee; text-align: right; }

.tabs { display: flex; gap: 49px; height: 38px; border-top: 1px solid #cdd3e4; border-bottom: 2px solid #c0c9de; padding-top: 4px; padding-left: 26px; flex: none; }
.tabs button, .view-tabs button { position: relative; flex: none; }
.tabs button:last-of-type { flex: 0 1 auto; min-width: 0; overflow: hidden; margin-right: -49px; text-align: left; }
.edge { position: absolute; fill: none; stroke: #c0c9de; stroke-width: 2; overflow: visible; }
.tabs .edge { left: -23px; top: 0; width: calc(100% + 50px); height: 100%; }
.tabs .more { display: flex; flex: none; align-items: center; gap: 5px; margin-left: auto; margin-right: -16px; padding-left: 3px; border: solid #c0c9de; border-width: 1px 0 0 1px; }
.more svg { width: 16px; flex: none; }
.more svg + svg { width: 30px; }
.toolbar { display: flex; height: 74px; flex: none; }
.toolbar button, .side button { width: 56px; height: 56px; flex: none; }
.toolbar .next { width: 8px; height: 16px; margin-top: 20px; margin-left: 6px; }

.work { flex: 1; display: flex; min-height: 0; }
.side { width: 110px; flex: none; overflow: hidden; border-right: 1px solid #b9c4dc; }
.side::before { content: ""; display: block; height: 2px; width: 104px; margin: 5px 0; border: solid #c8d0e2; border-width: 1px 0; }
.side-grid { display: grid; grid-template-columns: 56px 56px; margin-left: -10px; }
.viewport { flex: 1; position: relative; background: #9ea4ab; border: solid #b9c4dc; border-width: 1px 0; overflow: hidden; }
.scene { width: 100%; height: 100%; }
.axis { font: 28px "Open Sans", sans-serif; fill: #5d6164; }
.view-name { position: absolute; left: 0; top: 0; height: 35px; display: flex; align-items: center; background: #859ced; border-radius: 0 0 4px; padding-left: 10px; }
.view-name b { padding-right: 8px; border-right: 1px solid #333; line-height: 32px; }
.view-name svg { width: 14px; margin: 0 4px; }

.view-tabs { display: flex; height: 50px; padding-left: 133px; gap: 33px; flex: none; font-size: 22px; }
.view-tabs button { height: 44px; }
.view-tabs .edge { left: -23px; top: 0; width: calc(100% + 33px); height: 41px; }
.plus { width: 18px; margin-left: 6px; }
.osnap { display: flex; height: 42px; padding-left: 8px; gap: 15px; align-items: center; flex: none; font-size: 22px; margin-top: -1px; margin-bottom: -1px; }
.osnap label { display: flex; align-items: center; gap: 7px; }
.osnap input { appearance: none; box-sizing: border-box; width: 28px; height: 28px; margin: 0 -1px; background: #fff; border: 2px solid #222; }
.osnap .off input { background: #e1e1e1; border-color: #b0b0b0; width: 26px; height: 26px; margin: 0; }
.osnap .last { margin-left: 19px; }
.status { display: grid; grid-template-columns: 54px 117px 117px 117px 117px 226px 87px 58px 60px 63px 95px 77px 123px 34px; height: 14px; border-top: 2px solid #b9c4dc; overflow: hidden; flex: none; font-size: 22px; }
.status > * { box-sizing: border-box; border-right: 1px solid #b9c4dc; overflow: hidden; line-height: 32px; height: 32px; text-align: left; padding-left: 2px; white-space: nowrap; }
.status span { padding-left: 8px; }
.status span:nth-child(5) { padding-left: 2px; }
.status span:first-child { padding-left: 0; margin-left: -8px; }
.status .mid { padding-left: 52px; }
.status .layer { display: flex; gap: 5px; padding-left: 6px; }
.layer i { width: 20px; height: 20px; margin-top: 5px; background: #000; }
.status .on { background: #cfd7ee; font-weight: bold; }

.gh { background: #f0f0f0; color: #000; border-top: 2px solid #0a57be; border-left: 1px solid #999; }
.gh .title { color: #000; }
.gh .title h1 { margin-left: 10px; }
.gh .win-buttons svg { stroke: #000; }
.gh .win-buttons { margin-right: -13px; }
.gh-menu { display: flex; align-items: center; gap: 26px; height: 52px; padding-left: 18px; background: linear-gradient(90deg, #f0f0f0, #fdfdfd); flex: none; }
.gh-menu span { margin-left: auto; }
.gh-tabs { display: flex; height: 44px; padding-left: 14px; gap: 30px; font: 22px "Liberation Sans", sans-serif; color: #666; flex: none; }
.gh-tabs .on { color: #000; background: linear-gradient(#fff 70%, #e6e6e6); border: 1px solid #999; border-bottom: 0; border-radius: 12px 12px 0 0; padding: 0 15px 5px; margin: 0 -15px; }
.ribbon { display: flex; gap: 8px; padding: 3px 4px 0; height: 170px; background: linear-gradient(#d6d6d6, #f0f0f0 85%); border-top: 1px solid #999; flex: none; align-items: flex-start; }
.rpanel { border: 1px solid #888; border-radius: 8px; overflow: hidden; box-sizing: border-box; background: linear-gradient(#dedede, #f2f2f2); flex: none; }
.rbody { display: flex; padding: 2px 3px 3px; height: 111px; }
.rsec { display: flex; }
.rsec + .rsec { margin-left: 10px; padding-left: 9px; border-left: 1px solid #bbb; }
.rcol button { display: block; width: 56px; height: 56px; }
.rpanel h2 { display: flex; align-items: center; height: 24px; padding-bottom: 3px; background: linear-gradient(#333, #1a1a1a); color: #fff; font: 20px "Liberation Sans", sans-serif; }
.rpanel h2 span { flex: 1; text-align: center; }
.rpanel h2 svg { width: 14px; margin-right: 5px; flex: none; }

.gh-tools { display: flex; align-items: center; height: 55px; border-top: 2px solid #777; background: linear-gradient(#fff, #f4f4f4); flex: none; }
.gh-tools button { width: 53px; height: 53px; flex: none; }
.gh-tools .narrow { width: 51px; }
.gh-tools hr { width: 1px; height: 46px; margin: 0 5px; border: 0; background: #bbb; flex: none; }
.zoom { position: relative; width: 269px; }
.zoom select { appearance: none; width: 100%; height: 41px; border: 2px solid #777; background: #fff; padding: 0 3px; font-family: inherit; font-size: 22px; color: #000; }
.zoom svg { position: absolute; right: 9px; top: 16px; width: 14px; }
.drop { width: 0; border: 5px solid transparent; border-top: 6px solid #000; border-bottom: 0; margin: 4px 8px 0 7px; flex: none; }
.preview { display: flex; align-items: center; margin-left: auto; margin-right: -12px; }
.preview hr { margin: 0 8px; }
.preview .tight { margin: 0 3px; }
.preview .on { box-shadow: inset 0 0 0 2px #1978c8; }
.preview .drop { margin: 4px 4px 0; }

.canvas { flex: 1; position: relative; min-height: 0; background: #d4cfc8; overflow: hidden; }
.graph { width: 100%; height: 100%; }
.wire { fill: none; stroke: #000; stroke-opacity: .62; stroke-width: 4; }
.thin { stroke-width: 3; }
.dash { stroke-width: 6; stroke-dasharray: 13 8; stroke-linecap: round; }
.rim { stroke: #333; stroke-width: 2; }
.note text { font: 12px "Liberation Mono", monospace; fill: #222; }
.caption { font: 29px "Liberation Sans", sans-serif; fill: #000; }
.watermark { position: absolute; right: 104px; bottom: 54px; color: #b3b1af; font-size: 28px; line-height: 40px; }
.watermark .big { font-size: 39px; line-height: 52px; }
.compass { position: absolute; right: 3px; bottom: 14px; width: 92px; height: 92px; }
.widgets { position: absolute; left: 0; bottom: 0; display: flex; gap: 8px; padding: 3px 17px 5px 4px; border: 1px solid #000; background: linear-gradient(#eee, #888); }
.widgets button { width: 48px; height: 48px; }
.hex { font: bold 25px "Liberation Serif", serif; text-anchor: middle; }
.gh-status { height: 8px; border-top: 2px solid #fff; flex: none; overflow: hidden; }
.gh-status i { display: block; width: 18px; height: 18px; margin-left: 8px; border: 3px solid #2a3fb0; border-radius: 50%; }
</style>
